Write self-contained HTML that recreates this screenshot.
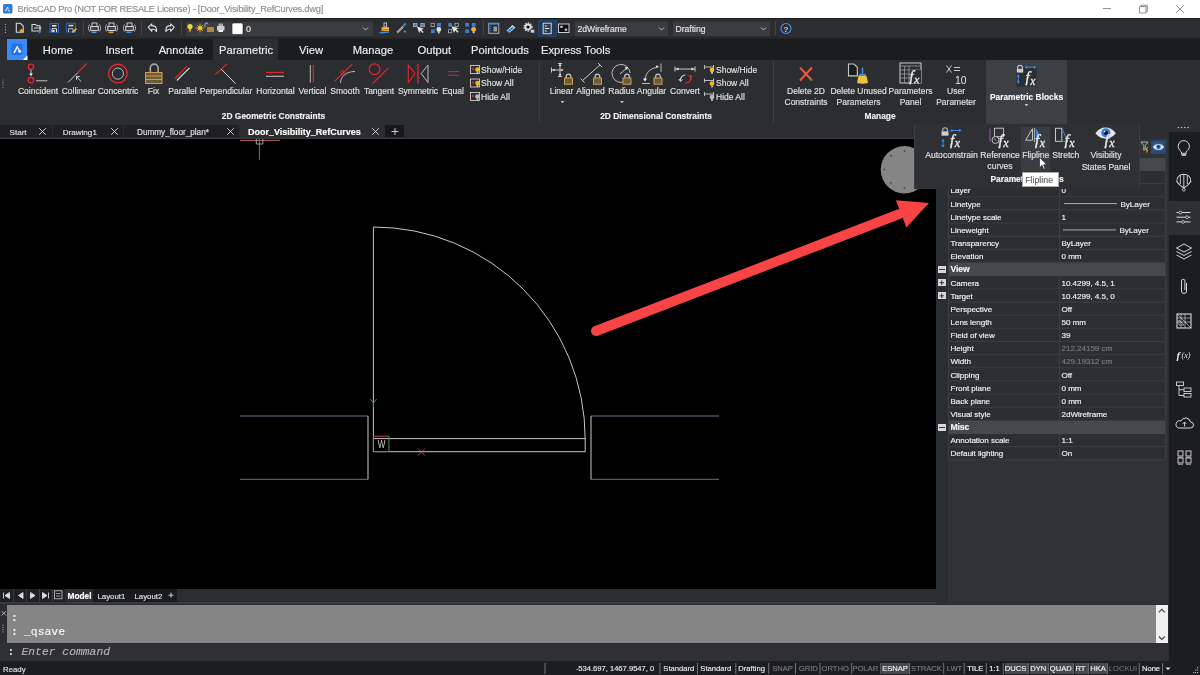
<!DOCTYPE html>
<html><head><meta charset="utf-8">
<style>
*{margin:0;padding:0;box-sizing:border-box}
html,body{width:1200px;height:675px;overflow:hidden;background:#2b2d30;font-family:"Liberation Sans",sans-serif;color:#e6e6e6;position:relative}
.a{position:absolute}
.t{position:absolute;white-space:nowrap;line-height:1;-webkit-text-stroke:0.15px currentColor}
#root{position:absolute;left:0;top:0;width:1200px;height:675px;overflow:hidden;will-change:transform}
svg{overflow:visible}
</style></head><body><div id="root">
<div class="a" style="left:0px;top:0px;width:1200px;height:18px;background:#ffffff;"></div>
<svg class="a" style="left:0px;top:0px" width="20" height="18" viewBox="0 0 20 18"><rect x="3" y="4" width="9.5" height="9.5" rx="1.5" fill="#2d7de0"/><path d="M5.6 11.2 L7.6 7 L8.4 8.6 M7.8 9.8 L9.8 11.2" stroke="#fff" stroke-width="1" fill="none"/></svg>
<div class="t" style="left:17.5px;top:5.00px;font-size:9.3px;color:#8e8e8e;font-weight:normal;font-family:'Liberation Sans',sans-serif;letter-spacing:-0.24px;font-style:normal;">BricsCAD Pro (NOT FOR RESALE License) - [Door_Visibility_RefCurves.dwg]</div>
<svg class="a" style="left:1095px;top:0px" width="105" height="18" viewBox="1095 0 105 18"><path d="M1103 8.5h8" stroke="#777" stroke-width="0.8"/><path d="M1139.5 6.5h6.5v6.5h-6.5z M1141 6.5v-1.3h6.3v6.3h-1.3" stroke="#777" stroke-width="0.8" fill="none"/><path d="M1176 5l8 8M1184 5l-8 8" stroke="#777" stroke-width="0.8"/></svg>
<div class="a" style="left:0px;top:18px;width:1200px;height:1px;background:#1c1d1f;"></div>
<div class="a" style="left:0px;top:19px;width:1200px;height:19px;background:#2b2d30;"></div>
<div class="a" style="left:0px;top:37.4px;width:1200px;height:1.8px;background:#25272a;"></div>
<svg class="a" style="left:0px;top:18px" width="200" height="21" viewBox="0 18 200 21"><circle cx="5.5" cy="24.5" r="0.6" fill="#bbb"/><circle cx="5.5" cy="27.1" r="0.6" fill="#bbb"/><circle cx="5.5" cy="29.7" r="0.6" fill="#bbb"/><circle cx="5.5" cy="32.3" r="0.6" fill="#bbb"/><path d="M16.3 23.3h4.2l2.7 2.7v6.2h-6.9z" stroke="#d8d8d8" stroke-width="1.1" fill="none"/><path d="M21.6 28.6l2.3 2.3-2.3 2.3-2.3-2.3z" fill="#f0a030"/><path d="M32 24.5h3.5l1 1.2h3.5v5.3h-8z" stroke="#d8d8d8" stroke-width="1.1" fill="none"/><path d="M34 28h7.5" stroke="#d8d8d8" stroke-width="1"/><path d="M39.6 30.4l1.5 1.5-1.5 1.5-1.5-1.5z" fill="#3c7fe0"/><rect x="50" y="23.5" width="8.5" height="8.8" fill="#2b2d30" stroke="#2466c0" stroke-width="1"/><rect x="52" y="25" width="4.5" height="1.6" fill="#e8e8e8"/><path d="M52 32v-3.3h4.5V32" stroke="#e8e8e8" stroke-width="1" fill="none"/><rect x="52.6" y="30" width="2" height="2" fill="#e8e8e8"/><rect x="66.5" y="23.3" width="9" height="8.8" fill="#2b2d30" stroke="#2466c0" stroke-width="1"/><rect x="68.5" y="24.8" width="5" height="1.6" fill="#d8d8d8"/><path d="M68.5 32v-3.3h4.5V32" stroke="#bbb" stroke-width="1" fill="none"/><path d="M72.5 32.5l4-4" stroke="#e8c060" stroke-width="1.6"/><path d="M83.5 21v14" stroke="#444" stroke-width="1"/><rect x="92.0" y="23" width="5" height="3.5" fill="#2b2d30" stroke="#ddd" stroke-width="0.9"/><rect x="90.7" y="26.5" width="7.6" height="4" fill="#444" stroke="#ddd" stroke-width="0.9"/><path d="M89.5 24.5c-1.3 2-1.3 5 0 7M99.5 24.5c1.3 2 1.3 5 0 7" stroke="#ccc" stroke-width="0.8" fill="none"/><path d="M91.5 32.3h5" stroke="#5aa0e0" stroke-width="1.6"/><rect x="109.0" y="23" width="5" height="3.5" fill="#2b2d30" stroke="#ddd" stroke-width="0.9"/><rect x="107.7" y="26.5" width="7.6" height="4" fill="#444" stroke="#ddd" stroke-width="0.9"/><path d="M106.5 24.5c-1.3 2-1.3 5 0 7M116.5 24.5c1.3 2 1.3 5 0 7" stroke="#ccc" stroke-width="0.8" fill="none"/><path d="M108.5 32.3h5" stroke="#f0a030" stroke-width="1.6"/><rect x="127.0" y="23" width="5" height="3.5" fill="#2b2d30" stroke="#ddd" stroke-width="0.9"/><rect x="125.7" y="26.5" width="7.6" height="4" fill="#444" stroke="#ddd" stroke-width="0.9"/><path d="M124.5 24.5c-1.3 2-1.3 5 0 7M134.5 24.5c1.3 2 1.3 5 0 7" stroke="#ccc" stroke-width="0.8" fill="none"/><path d="M126.5 32.3h5" stroke="#3c8ce7" stroke-width="1.6"/><path d="M141.5 21v14" stroke="#444" stroke-width="1"/><path d="M148.2 27.2l3.6-3.4v2.1h1.2c2.2 0 3.5 1.8 3.5 4.2v1.5c-0.6-1.6-1.7-2.4-3.5-2.4h-1.2v2.1z" fill="none" stroke="#e0e0e0" stroke-width="1.1" stroke-linejoin="round"/><path d="M174.2 27.2l-3.6-3.4v2.1h-1.2c-2.2 0-3.5 1.8-3.5 4.2v1.5c0.6-1.6 1.7-2.4 3.5-2.4h1.2v2.1z" fill="none" stroke="#e0e0e0" stroke-width="1.1" stroke-linejoin="round"/><path d="M181.5 21v14" stroke="#444" stroke-width="1"/></svg>
<div class="a" style="left:185.5px;top:22.3px;width:187.5px;height:13.5px;background:#3a3c40;"></div>
<svg class="a" style="left:180px;top:18px" width="200" height="21" viewBox="180 18 200 21"><circle cx="190" cy="26.5" r="2.6" fill="#f5d040"/><rect x="189" y="29" width="2" height="2.5" fill="#c9a030"/><circle cx="200" cy="28" r="2.5" fill="#f5c020"/><path d="M200 23.5v1.5M200 31v1.5M195.5 28h1.5M203 28h1.5M197 25l1 1M202 30l1 1M203 25l-1 1M197 31l1-1" stroke="#f5c020" stroke-width="0.8"/><rect x="207" y="27" width="7" height="5" fill="#b08840"/><path d="M205 27v-2.5a1.5 1.5 0 0 1 3 0" stroke="#ddd" stroke-width="0.8" fill="none"/><rect x="217" y="26" width="7.5" height="4.5" fill="#ccc"/><rect x="218.5" y="23.5" width="4.5" height="2.5" fill="#aaa"/><rect x="218.5" y="30" width="4.5" height="2" fill="#eee"/><rect x="232" y="23" width="11" height="11.5" rx="1.5" fill="#fff" stroke="#222" stroke-width="0.6"/><path d="M363 27.5l2.5 2.5 2.5-2.5" stroke="#ccc" stroke-width="0.9" fill="none"/></svg>
<div class="t" style="left:246px;top:25.00px;font-size:9px;color:#e6e6e6;font-weight:normal;font-family:'Liberation Sans',sans-serif;letter-spacing:0px;font-style:normal;">0</div>
<svg class="a" style="left:370px;top:18px" width="210" height="21" viewBox="370 18 210 21"><rect x="384" y="23" width="2.6" height="4" fill="none" stroke="#ddd" stroke-width="0.8"/><path d="M381.5 27.3h7.5v2h-7.5z" fill="#f0c040"/><path d="M381.5 29.3h7.5v1.8h-7.5z" fill="#e8a030"/><path d="M379.5 32.6c3 0.3 6 0 9.5-0.6" stroke="#3c8ce7" stroke-width="1.4" fill="none"/><path d="M397.2 32.5l6-6" stroke="#d8d8d8" stroke-width="1.8"/><path d="M397.2 32.5l6-6" stroke="#2b2d30" stroke-width="0.6"/><path d="M402.5 25l2.8-2.3 1.3 1.3-2.3 2.8z" fill="#3c7fd0"/><path d="M403.5 31.6l1.4-1.4 1.4 1.4-1.4 1.4z" fill="#4caf50"/><rect x="413.5" y="23.5" width="3.5" height="3.2" fill="#3c7fd0" stroke="#bbb" stroke-width="0.7"/><rect x="420.8" y="23.5" width="3.5" height="3.2" fill="#3c7fd0" stroke="#bbb" stroke-width="0.7"/><path d="M417 26.5l2.2 6.5 1.2-2.4 2.2 2.4 1-1-2.2-2.2 2.5-1z" fill="#e8e8e8"/><rect x="431" y="23.3" width="3.5" height="3.3" fill="none" stroke="#aaa" stroke-width="0.8"/><rect x="437.2" y="23" width="3.8" height="3.6" fill="#3c7fd0"/><rect x="431" y="29.4" width="3.8" height="3.6" fill="#3c7fd0"/><circle cx="438.8" cy="29.5" r="2.4" fill="#e0e0e0"/><rect x="437.9" y="31.5" width="1.8" height="2" fill="#ccc"/><rect x="448.2" y="23" width="3.8" height="3.6" fill="#3c7fd0"/><rect x="455" y="23.3" width="3.5" height="3.3" fill="none" stroke="#aaa" stroke-width="0.8"/><rect x="448.5" y="29.6" width="3.3" height="3.2" fill="none" stroke="#aaa" stroke-width="0.8"/><path d="M451.5 26.2l2.5 6.5 1.2-2.4 2.4 2.4 1-1-2.4-2.4 2.6-1z" fill="#e8e8e8"/><rect x="465.2" y="23" width="3.8" height="3.6" fill="#3c7fd0"/><rect x="471.8" y="23" width="3.8" height="3.6" fill="#3c7fd0"/><rect x="465.2" y="29.4" width="3.8" height="3.6" fill="#3c7fd0"/><circle cx="473.6" cy="29.3" r="2.4" fill="#f5b820"/><rect x="472.7" y="31.3" width="1.8" height="2" fill="#ccc"/><path d="M483.5 21v14" stroke="#444" stroke-width="1"/><rect x="488.8" y="23.3" width="10" height="10" fill="#2b2d30" stroke="#bbb" stroke-width="0.9"/><rect x="488.8" y="23" width="10" height="1.6" fill="#3c8ce7"/><path d="M490.3 26v5.5" stroke="#3c8ce7" stroke-width="1" stroke-dasharray="1 1"/><rect x="493.5" y="26.5" width="3.5" height="5" fill="#999"/><path d="M506.5 30.5l6-5.5 3 2.5-6 5.3z" fill="#d8d8d8"/><path d="M508.5 28.7l3 2.6" stroke="#2b2d30" stroke-width="0.7"/><path d="M507 31l5.5-4.5 1.5 1.5-5.5 4.5z" fill="#3c8ce7"/><circle cx="528" cy="27" r="2.6" fill="none" stroke="#ddd" stroke-width="2"/><circle cx="528" cy="27" r="4" fill="none" stroke="#ddd" stroke-width="1.3" stroke-dasharray="1.3 1.3"/><circle cx="528" cy="27" r="1.3" fill="#111"/><rect x="530.5" y="29.5" width="4" height="3.5" fill="#ccd" stroke="#2b2d30" stroke-width="0.5"/><rect x="538.5" y="20.5" width="18" height="16" fill="#1f3a5c" stroke="#284d78" stroke-width="0.7"/><rect x="543.2" y="23.2" width="8" height="10.5" fill="#2b3d55" stroke="#d8d8d8" stroke-width="1"/><path d="M544.8 26h2M544.8 28.5h4.5M544.8 31h2" stroke="#e8e8e8" stroke-width="1.1"/><rect x="558.5" y="24" width="10.5" height="8.5" fill="#111" stroke="#ccc" stroke-width="1"/><rect x="560.3" y="25.8" width="2.3" height="2" fill="#ddd"/><rect x="564.8" y="28.7" width="2.3" height="2" fill="#ddd"/></svg>
<div class="a" style="left:574.6px;top:21.8px;width:93.7px;height:14px;background:#3a3c40;"></div>
<div class="t" style="left:577.5px;top:25.00px;font-size:8.6px;color:#e6e6e6;font-weight:normal;font-family:'Liberation Sans',sans-serif;letter-spacing:0px;font-style:normal;">2dWireframe</div>
<div class="a" style="left:673px;top:21.8px;width:97.4px;height:14px;background:#3a3c40;"></div>
<div class="t" style="left:675.5px;top:25.00px;font-size:8.6px;color:#e6e6e6;font-weight:normal;font-family:'Liberation Sans',sans-serif;letter-spacing:0px;font-style:normal;">Drafting</div>
<svg class="a" style="left:650px;top:18px" width="150" height="21" viewBox="650 18 150 21"><path d="M659 27.5l2.5 2.5 2.5-2.5M761 27.5l2.5 2.5 2.5-2.5" stroke="#ccc" stroke-width="0.9" fill="none"/><path d="M775.5 21v14" stroke="#444" stroke-width="1"/><circle cx="786" cy="28.5" r="5" fill="none" stroke="#3c8ce7" stroke-width="1.2"/><text x="786" y="31.5" font-size="8" font-family="Liberation Sans" font-weight="bold" fill="#ddd" text-anchor="middle">?</text></svg>
<div class="a" style="left:0px;top:39.2px;width:27px;height:20.8px;background:#2b2d30;"></div>
<div class="a" style="left:27px;top:39.2px;width:1173px;height:20.8px;background:#1a1c1e;"></div>
<div class="a" style="left:6.9px;top:39.3px;width:20.6px;height:20.6px;background:#3b8af5;"></div>
<svg class="a" style="left:0px;top:38px" width="30" height="23" viewBox="0 38 30 23"><rect x="11.5" y="43.5" width="11" height="11.5" rx="1.5" fill="#1f70ea"/><path d="M14 52.8l3.6-6.4" stroke="#fff" stroke-width="1.6" fill="none"/><path d="M17 46.5l2.5 4" stroke="#fff" stroke-width="1.2"/><circle cx="19.7" cy="51.2" r="1.5" fill="#fff"/><path d="M27.5 55.3v4.6h-4.6z" fill="#fff"/></svg>
<div class="a" style="left:213px;top:39.2px;width:64.8px;height:20.8px;background:#2b2d30;"></div>
<div class="t" style="left:-142.25px;width:400px;text-align:center;top:45.00px;font-size:11.2px;color:#ececec;font-weight:normal;font-family:'Liberation Sans',sans-serif;letter-spacing:0px;font-style:normal;">Home</div>
<div class="t" style="left:-80.5px;width:400px;text-align:center;top:45.00px;font-size:11.2px;color:#ececec;font-weight:normal;font-family:'Liberation Sans',sans-serif;letter-spacing:0px;font-style:normal;">Insert</div>
<div class="t" style="left:-18.94999999999999px;width:400px;text-align:center;top:45.00px;font-size:11.2px;color:#ececec;font-weight:normal;font-family:'Liberation Sans',sans-serif;letter-spacing:0px;font-style:normal;">Annotate</div>
<div class="t" style="left:46.0px;width:400px;text-align:center;top:45.00px;font-size:11.2px;color:#ececec;font-weight:normal;font-family:'Liberation Sans',sans-serif;letter-spacing:0px;font-style:normal;">Parametric</div>
<div class="t" style="left:111.0px;width:400px;text-align:center;top:45.00px;font-size:11.2px;color:#ececec;font-weight:normal;font-family:'Liberation Sans',sans-serif;letter-spacing:0px;font-style:normal;">View</div>
<div class="t" style="left:172.89999999999998px;width:400px;text-align:center;top:45.00px;font-size:11.2px;color:#ececec;font-weight:normal;font-family:'Liberation Sans',sans-serif;letter-spacing:0px;font-style:normal;">Manage</div>
<div class="t" style="left:234.25px;width:400px;text-align:center;top:45.00px;font-size:11.2px;color:#ececec;font-weight:normal;font-family:'Liberation Sans',sans-serif;letter-spacing:0px;font-style:normal;">Output</div>
<div class="t" style="left:299.9px;width:400px;text-align:center;top:45.00px;font-size:11.2px;color:#ececec;font-weight:normal;font-family:'Liberation Sans',sans-serif;letter-spacing:0px;font-style:normal;">Pointclouds</div>
<div class="t" style="left:375.70000000000005px;width:400px;text-align:center;top:45.00px;font-size:11.2px;color:#ececec;font-weight:normal;font-family:'Liberation Sans',sans-serif;letter-spacing:0px;font-style:normal;">Express Tools</div>
<div class="a" style="left:0px;top:60px;width:1200px;height:65px;background:#2b2d30;"></div>
<div class="a" style="left:986.3px;top:60.1px;width:80.5px;height:64.7px;background:#3c3f43;"></div>
<svg class="a" style="left:0px;top:60px" width="10" height="40" viewBox="0 60 10 40"><circle cx="3" cy="80.0" r="0.55" fill="#aaa"/><circle cx="3" cy="82.4" r="0.55" fill="#aaa"/><circle cx="3" cy="84.8" r="0.55" fill="#aaa"/><circle cx="3" cy="87.2" r="0.55" fill="#aaa"/></svg>
<svg class="a" style="left:0px;top:60px" width="1100" height="65" viewBox="0 60 1100 65"><circle cx="31" cy="66.8" r="2.7" fill="none" stroke="#e3262d" stroke-width="1.3"/><path d="M31 70v4.5" stroke="#eee" stroke-width="0.8"/><path d="M29.2 73.5h3.6L31 76.2z" fill="#eee"/><circle cx="31" cy="80.2" r="2.7" fill="none" stroke="#e3262d" stroke-width="1.3"/><path d="M36 80.7h11.3" stroke="#aaa" stroke-width="1.2"/><path d="M68 82.5L78 72.5" stroke="#ccc" stroke-width="1"/><path d="M78 72.5L86.5 63.5" stroke="#e3262d" stroke-width="1.2"/><path d="M76.5 76.5l4.5 5M76.5 76.5v3.3M76.5 76.5h3.3" stroke="#ddd" stroke-width="0.9"/><circle cx="117.9" cy="73.6" r="9.3" fill="none" stroke="#e3262d" stroke-width="1.4"/><circle cx="117.9" cy="73.6" r="5.6" fill="none" stroke="#bbb" stroke-width="1"/><path d="M150.3 72.5v-4.5a3.9 3.9 0 0 1 7.8 0v4.5" stroke="#aaa" stroke-width="1.6" fill="none"/><rect x="145.5" y="72.5" width="16.5" height="11" fill="#6d5a38" stroke="#d8a850" stroke-width="0.9"/><path d="M145.5 76h16.5M145.5 79.5h16.5" stroke="#d8a850" stroke-width="0.9"/><path d="M175 78.5L187 66.2" stroke="#e3262d" stroke-width="1.1"/><path d="M176.8 80.5L189.6 67.8" stroke="#ddd" stroke-width="1.1"/><path d="M215.2 74.6L227 64" stroke="#e3262d" stroke-width="1.2"/><path d="M221.3 69.2L235.5 83.6" stroke="#ddd" stroke-width="1"/><path d="M266 72.4h18" stroke="#e3262d" stroke-width="1.2"/><path d="M266 76.3h18" stroke="#bbb" stroke-width="1.1"/><path d="M310.3 65v17.5" stroke="#bbb" stroke-width="1"/><path d="M313.3 65v17.5" stroke="#e3262d" stroke-width="1.2"/><path d="M340.5 83c0-6 5-11.5 14.5-11.5" stroke="#bbb" stroke-width="1" fill="none"/><path d="M334.7 81.1L352.2 64.2" stroke="#e3262d" stroke-width="1.2"/><circle cx="342.6" cy="72.3" r="1.8" fill="none" stroke="#e3262d" stroke-width="1"/><circle cx="374.5" cy="69.3" r="5.4" fill="none" stroke="#e3262d" stroke-width="1.2"/><path d="M372.7 83.5L388.4 67.9" stroke="#e3262d" stroke-width="1.2"/><path d="M408.3 65v17.5l6.7-9z" fill="none" stroke="#e3262d" stroke-width="1.1"/><path d="M418 64v19.5" stroke="#e3262d" stroke-width="1.3"/><path d="M428 65v17.5l-6.8-9z" fill="none" stroke="#bbb" stroke-width="1"/><path d="M448 71.6h11M448 75.2h11" stroke="#e3262d" stroke-width="0.9"/><rect x="470.5" y="65.5" width="9" height="8" fill="none" stroke="#ccc" stroke-width="0.9"/><rect x="472" y="68.0" width="2" height="2" fill="#c03030"/><circle cx="477.5" cy="69.5" r="2.3" fill="#f5b820"/><rect x="476.7" y="71.5" width="1.6" height="2" fill="#ccc"/><rect x="470.5" y="79" width="9" height="8" fill="none" stroke="#ccc" stroke-width="0.9"/><rect x="472" y="81.5" width="2" height="2" fill="#c03030"/><circle cx="477.5" cy="83" r="2.3" fill="#f5b820"/><rect x="476.7" y="85" width="1.6" height="2" fill="#ccc"/><rect x="470.5" y="92.5" width="9" height="8" fill="none" stroke="#ccc" stroke-width="0.9"/><rect x="472" y="95.0" width="2" height="2" fill="#c03030"/><circle cx="477.5" cy="96.5" r="2.3" fill="#bbb"/><rect x="476.7" y="98.5" width="1.6" height="2" fill="#ccc"/><path d="M539.2 61v62" stroke="#3c3f43" stroke-width="1"/><path d="M558 63.5h4M560 63.5v13M558 76.5h4M551.5 70h11M551.5 67.5v5" stroke="#ddd" stroke-width="0.9"/><path d="M558.5 66l1.5-2 1.5 2zM558.5 74l1.5 2 1.5-2zM552.5 70l2-1.3v2.6zM563.5 70l-2-1.3v2.6z" fill="#eee"/><path d="M582.5 80.5L600 65M580.5 78.5l4 4M598 63l4 4" stroke="#ddd" stroke-width="0.9"/><path d="M625 81.5A9 9 0 1 1 630 73" stroke="#ccc" stroke-width="0.9" fill="none"/><path d="M620 74l7.5-6.5" stroke="#ddd" stroke-width="0.9"/><path d="M628 67l-3.5 0.6 2.5 2.5z" fill="#eee"/><path d="M645 79.5c1-7 5-11 11.5-12" stroke="#ccc" stroke-width="0.9" fill="none"/><path d="M661 63.5v8.5M642 83.5h8" stroke="#ccc" stroke-width="0.9"/><path d="M643 78.5h4l-2 3zM656.5 65l2.5 2-3 1z" fill="#eee"/><path d="M566.2 78v-1.6a2.3 2.3 0 0 1 4.6 0v1.6" stroke="#ccc" stroke-width="1.2" fill="none"/><rect x="564.5" y="78" width="8" height="6.2" fill="#6d5a38" stroke="#d8a850" stroke-width="0.9"/><path d="M595.2 78v-1.6a2.3 2.3 0 0 1 4.6 0v1.6" stroke="#ccc" stroke-width="1.2" fill="none"/><rect x="593.5" y="78" width="8" height="6.2" fill="#6d5a38" stroke="#d8a850" stroke-width="0.9"/><path d="M624.7 78v-1.6a2.3 2.3 0 0 1 4.6 0v1.6" stroke="#ccc" stroke-width="1.2" fill="none"/><rect x="623" y="78" width="8" height="6.2" fill="#6d5a38" stroke="#d8a850" stroke-width="0.9"/><path d="M655.7 78v-1.6a2.3 2.3 0 0 1 4.6 0v1.6" stroke="#ccc" stroke-width="1.2" fill="none"/><rect x="654" y="78" width="8" height="6.2" fill="#6d5a38" stroke="#d8a850" stroke-width="0.9"/><path d="M675 66.5v5M695 66.5v5M675 69h20" stroke="#ddd" stroke-width="0.9"/><path d="M676 69l2.5-1.5v3zM694 69l-2.5-1.5v3z" fill="#eee"/><path d="M680.5 80.5a5 5 0 0 1 5-5.5" stroke="#ddd" stroke-width="1.1" fill="none"/><path d="M679 79l1.5 2.5 2-2" stroke="#ddd" stroke-width="1" fill="none"/><path d="M690.5 76a5 5 0 0 1-5 7" stroke="#e03030" stroke-width="1.2" fill="none"/><path d="M692 77.5l-1.5-2.5-2 2" stroke="#e03030" stroke-width="1" fill="none"/><path d="M704.5 65v4M704.5 67h9M713.5 65v4" stroke="#ccc" stroke-width="0.9"/><circle cx="712" cy="70" r="2.3" fill="#f5b820"/><rect x="711.2" y="72" width="1.6" height="2" fill="#ccc"/><path d="M704.5 78.5v4M704.5 80.5h9M713.5 78.5v4" stroke="#ccc" stroke-width="0.9"/><circle cx="712" cy="83.5" r="2.3" fill="#f5b820"/><rect x="711.2" y="85.5" width="1.6" height="2" fill="#ccc"/><path d="M704.5 92v4M704.5 94h9M713.5 92v4" stroke="#ccc" stroke-width="0.9"/><circle cx="712" cy="97" r="2.3" fill="#bbb"/><rect x="711.2" y="99" width="1.6" height="2" fill="#ccc"/><path d="M773.5 61v62" stroke="#3c3f43" stroke-width="1"/><path d="M800 67.5l12 13M812 67.5l-12 13" stroke="#f0553c" stroke-width="2"/><path d="M848.5 64h5.5l3.3 3.3v8.6h-8.8z" fill="#1a1c1e" stroke="#c8c8c8" stroke-width="1.1"/><path d="M862.5 67.5v6" stroke="#5a90f0" stroke-width="1.4"/><path d="M859.5 73.8h6l1 2h-8z" fill="#3c8ce7"/><path d="M858.5 75.8h8l1.5 7.2c-4 1-7 1-11 0z" fill="#f0c040"/><rect x="900" y="63" width="21" height="20" fill="none" stroke="#ccc" stroke-width="1"/><path d="M900 66h21M900 70h21M900 74h21M900 78h21M904.5 66v17M909 66v17" stroke="#aaa" stroke-width="0.7"/><rect x="910" y="70" width="11" height="13" fill="#2b2d30"/><text x="909.5" y="80.5" font-family="Liberation Serif" font-style="italic" font-size="14.5" fill="#ececec" stroke="#ececec" stroke-width="0.35">f</text><text x="914.3" y="83.1" font-family="Liberation Serif" font-style="italic" font-size="11.3" fill="#ececec" stroke="#ececec" stroke-width="0.3">x</text><path d="M946.5 65.5l5 7M951.5 65.5l-5 7M954 67.5h6M954 70.5h6" stroke="#ddd" stroke-width="0.9"/><text x="955" y="84" font-family="Liberation Sans" font-size="10.5" fill="#e6e6e6">10</text><rect x="1016.5" y="67.5" width="20" height="19" fill="#2b2d30"/><path d="M1017.6 69v-1.3a2.4 2.4 0 0 1 4.8 0V69" stroke="#ccc" stroke-width="1.1" fill="none"/><rect x="1016.8" y="68.8" width="6.4" height="3.8" fill="#ccc"/><path d="M1026 67.2h9" stroke="#3c8ce7" stroke-width="1"/><path d="M1024.8 67.2l2.3-1.8v3.6zM1036.2 67.2l-2.3-1.8v3.6z" fill="#3c8ce7"/><path d="M1018.3 76v6" stroke="#3c8ce7" stroke-width="1"/><path d="M1018.3 74.2l-1.8 2.4h3.6zM1018.3 83.8l-1.8-2.4h3.6z" fill="#3c8ce7"/><text x="1025.5" y="82" font-family="Liberation Serif" font-style="italic" font-size="15" fill="#ececec" stroke="#ececec" stroke-width="0.35">f</text><text x="1030.3" y="84.6" font-family="Liberation Serif" font-style="italic" font-size="11.7" fill="#ececec" stroke="#ececec" stroke-width="0.3">x</text><path d="M562.5 103l-2-1.8h4zM622 103l-2-1.8h4zM1026.5 106l-2-1.8h4z" fill="#eee"/></svg>
<div class="t" style="left:-162px;width:400px;text-align:center;top:87.00px;font-size:8.5px;color:#e0e0e0;font-weight:normal;font-family:'Liberation Sans',sans-serif;letter-spacing:0px;font-style:normal;">Coincident</div>
<div class="t" style="left:-121.5px;width:400px;text-align:center;top:87.00px;font-size:8.5px;color:#e0e0e0;font-weight:normal;font-family:'Liberation Sans',sans-serif;letter-spacing:0px;font-style:normal;">Collinear</div>
<div class="t" style="left:-82px;width:400px;text-align:center;top:87.00px;font-size:8.5px;color:#e0e0e0;font-weight:normal;font-family:'Liberation Sans',sans-serif;letter-spacing:0px;font-style:normal;">Concentric</div>
<div class="t" style="left:-46.5px;width:400px;text-align:center;top:87.00px;font-size:8.5px;color:#e0e0e0;font-weight:normal;font-family:'Liberation Sans',sans-serif;letter-spacing:0px;font-style:normal;">Fix</div>
<div class="t" style="left:-17.5px;width:400px;text-align:center;top:87.00px;font-size:8.5px;color:#e0e0e0;font-weight:normal;font-family:'Liberation Sans',sans-serif;letter-spacing:0px;font-style:normal;">Parallel</div>
<div class="t" style="left:26px;width:400px;text-align:center;top:87.00px;font-size:8.5px;color:#e0e0e0;font-weight:normal;font-family:'Liberation Sans',sans-serif;letter-spacing:0px;font-style:normal;">Perpendicular</div>
<div class="t" style="left:75.5px;width:400px;text-align:center;top:87.00px;font-size:8.5px;color:#e0e0e0;font-weight:normal;font-family:'Liberation Sans',sans-serif;letter-spacing:0px;font-style:normal;">Horizontal</div>
<div class="t" style="left:112.5px;width:400px;text-align:center;top:87.00px;font-size:8.5px;color:#e0e0e0;font-weight:normal;font-family:'Liberation Sans',sans-serif;letter-spacing:0px;font-style:normal;">Vertical</div>
<div class="t" style="left:145px;width:400px;text-align:center;top:87.00px;font-size:8.5px;color:#e0e0e0;font-weight:normal;font-family:'Liberation Sans',sans-serif;letter-spacing:0px;font-style:normal;">Smooth</div>
<div class="t" style="left:179px;width:400px;text-align:center;top:87.00px;font-size:8.5px;color:#e0e0e0;font-weight:normal;font-family:'Liberation Sans',sans-serif;letter-spacing:0px;font-style:normal;">Tangent</div>
<div class="t" style="left:218px;width:400px;text-align:center;top:87.00px;font-size:8.5px;color:#e0e0e0;font-weight:normal;font-family:'Liberation Sans',sans-serif;letter-spacing:0px;font-style:normal;">Symmetric</div>
<div class="t" style="left:253px;width:400px;text-align:center;top:87.00px;font-size:8.5px;color:#e0e0e0;font-weight:normal;font-family:'Liberation Sans',sans-serif;letter-spacing:0px;font-style:normal;">Equal</div>
<div class="t" style="left:481px;top:66.00px;font-size:8.5px;color:#e0e0e0;font-weight:normal;font-family:'Liberation Sans',sans-serif;letter-spacing:0px;font-style:normal;">Show/Hide</div>
<div class="t" style="left:716px;top:66.00px;font-size:8.5px;color:#e0e0e0;font-weight:normal;font-family:'Liberation Sans',sans-serif;letter-spacing:0px;font-style:normal;">Show/Hide</div>
<div class="t" style="left:481px;top:79.00px;font-size:8.5px;color:#e0e0e0;font-weight:normal;font-family:'Liberation Sans',sans-serif;letter-spacing:0px;font-style:normal;">Show All</div>
<div class="t" style="left:716px;top:79.00px;font-size:8.5px;color:#e0e0e0;font-weight:normal;font-family:'Liberation Sans',sans-serif;letter-spacing:0px;font-style:normal;">Show All</div>
<div class="t" style="left:481px;top:93.00px;font-size:8.5px;color:#e0e0e0;font-weight:normal;font-family:'Liberation Sans',sans-serif;letter-spacing:0px;font-style:normal;">Hide All</div>
<div class="t" style="left:716px;top:93.00px;font-size:8.5px;color:#e0e0e0;font-weight:normal;font-family:'Liberation Sans',sans-serif;letter-spacing:0px;font-style:normal;">Hide All</div>
<div class="t" style="left:361.5px;width:400px;text-align:center;top:87.00px;font-size:8.5px;color:#e0e0e0;font-weight:normal;font-family:'Liberation Sans',sans-serif;letter-spacing:0px;font-style:normal;">Linear</div>
<div class="t" style="left:390.5px;width:400px;text-align:center;top:87.00px;font-size:8.5px;color:#e0e0e0;font-weight:normal;font-family:'Liberation Sans',sans-serif;letter-spacing:0px;font-style:normal;">Aligned</div>
<div class="t" style="left:421.5px;width:400px;text-align:center;top:87.00px;font-size:8.5px;color:#e0e0e0;font-weight:normal;font-family:'Liberation Sans',sans-serif;letter-spacing:0px;font-style:normal;">Radius</div>
<div class="t" style="left:451.5px;width:400px;text-align:center;top:87.00px;font-size:8.5px;color:#e0e0e0;font-weight:normal;font-family:'Liberation Sans',sans-serif;letter-spacing:0px;font-style:normal;">Angular</div>
<div class="t" style="left:485px;width:400px;text-align:center;top:87.00px;font-size:8.5px;color:#e0e0e0;font-weight:normal;font-family:'Liberation Sans',sans-serif;letter-spacing:0px;font-style:normal;">Convert</div>
<div class="t" style="left:606px;width:400px;text-align:center;top:87.00px;font-size:8.5px;color:#e0e0e0;font-weight:normal;font-family:'Liberation Sans',sans-serif;letter-spacing:0px;font-style:normal;">Delete 2D</div>
<div class="t" style="left:606px;width:400px;text-align:center;top:98.00px;font-size:8.5px;color:#e0e0e0;font-weight:normal;font-family:'Liberation Sans',sans-serif;letter-spacing:0px;font-style:normal;">Constraints</div>
<div class="t" style="left:658.5px;width:400px;text-align:center;top:87.00px;font-size:8.5px;color:#e0e0e0;font-weight:normal;font-family:'Liberation Sans',sans-serif;letter-spacing:0px;font-style:normal;">Delete Unused</div>
<div class="t" style="left:658.5px;width:400px;text-align:center;top:98.00px;font-size:8.5px;color:#e0e0e0;font-weight:normal;font-family:'Liberation Sans',sans-serif;letter-spacing:0px;font-style:normal;">Parameters</div>
<div class="t" style="left:710.5px;width:400px;text-align:center;top:87.00px;font-size:8.5px;color:#e0e0e0;font-weight:normal;font-family:'Liberation Sans',sans-serif;letter-spacing:0px;font-style:normal;">Parameters</div>
<div class="t" style="left:710.5px;width:400px;text-align:center;top:98.00px;font-size:8.5px;color:#e0e0e0;font-weight:normal;font-family:'Liberation Sans',sans-serif;letter-spacing:0px;font-style:normal;">Panel</div>
<div class="t" style="left:756px;width:400px;text-align:center;top:87.00px;font-size:8.5px;color:#e0e0e0;font-weight:normal;font-family:'Liberation Sans',sans-serif;letter-spacing:0px;font-style:normal;">User</div>
<div class="t" style="left:756px;width:400px;text-align:center;top:98.00px;font-size:8.5px;color:#e0e0e0;font-weight:normal;font-family:'Liberation Sans',sans-serif;letter-spacing:0px;font-style:normal;">Parameter</div>
<div class="t" style="left:73.5px;width:400px;text-align:center;top:112.00px;font-size:8.4px;color:#f0f0f0;font-weight:bold;font-family:'Liberation Sans',sans-serif;letter-spacing:0px;font-style:normal;">2D Geometric Constraints</div>
<div class="t" style="left:456px;width:400px;text-align:center;top:112.00px;font-size:8.4px;color:#f0f0f0;font-weight:bold;font-family:'Liberation Sans',sans-serif;letter-spacing:0px;font-style:normal;">2D Dimensional Constraints</div>
<div class="t" style="left:680px;width:400px;text-align:center;top:112.00px;font-size:8.4px;color:#f0f0f0;font-weight:bold;font-family:'Liberation Sans',sans-serif;letter-spacing:0px;font-style:normal;">Manage</div>
<div class="t" style="left:826.5px;width:400px;text-align:center;top:93.00px;font-size:8.4px;color:#f4f4f4;font-weight:bold;font-family:'Liberation Sans',sans-serif;letter-spacing:0px;font-style:normal;">Parametric Blocks</div>
<div class="a" style="left:0px;top:125px;width:936px;height:13.5px;background:#2b2d30;"></div>
<div class="a" style="left:0px;top:125.3px;width:239.4px;height:12.2px;background:#1f2023;"></div>
<div class="a" style="left:239.4px;top:125.3px;width:145px;height:12.2px;background:#2b2d30;"></div>
<div class="a" style="left:385.3px;top:125.3px;width:18.4px;height:12.2px;background:#17181a;"></div>
<div class="a" style="left:51.5px;top:125.3px;width:0.8px;height:12.2px;background:#2b2d30;"></div>
<div class="a" style="left:122.5px;top:125.3px;width:0.8px;height:12.2px;background:#2b2d30;"></div>
<div class="a" style="left:0px;top:137.5px;width:936px;height:1px;background:#3a3c40;"></div>
<div class="t" style="left:9.5px;top:129.00px;font-size:8.1px;color:#e0e0e0;font-weight:normal;font-family:'Liberation Sans',sans-serif;letter-spacing:0px;font-style:normal;">Start</div>
<div class="t" style="left:62.7px;top:129.00px;font-size:8.1px;color:#e0e0e0;font-weight:normal;font-family:'Liberation Sans',sans-serif;letter-spacing:0px;font-style:normal;">Drawing1</div>
<div class="t" style="left:137px;top:129.00px;font-size:8.2px;color:#e0e0e0;font-weight:normal;font-family:'Liberation Sans',sans-serif;letter-spacing:0px;font-style:normal;">Dummy_floor_plan*</div>
<div class="t" style="left:248px;top:128.00px;font-size:9px;color:#ffffff;font-weight:bold;font-family:'Liberation Sans',sans-serif;letter-spacing:0px;font-style:normal;">Door_Visibility_RefCurves</div>
<svg class="a" style="left:0px;top:124px" width="410" height="16" viewBox="0 124 410 16"><path d="M39.2 128.2l6.6 6.6M45.8 128.2l-6.6 6.6" stroke="#ddd" stroke-width="0.9"/><path d="M111.2 128.2l6.6 6.6M117.8 128.2l-6.6 6.6" stroke="#ddd" stroke-width="0.9"/><path d="M227.2 128.2l6.6 6.6M233.8 128.2l-6.6 6.6" stroke="#ddd" stroke-width="0.9"/><path d="M372.2 128.2l6.6 6.6M378.8 128.2l-6.6 6.6" stroke="#ddd" stroke-width="0.9"/><path d="M391.5 131.5h7M395 128v7" stroke="#ddd" stroke-width="0.9"/></svg>
<div class="a" style="left:0px;top:138.5px;width:936px;height:450.2px;background:#000;"></div>
<svg class="a" style="left:0px;top:138px" width="936" height="451" viewBox="0 138 936 451"><path d="M240 140.4h40" stroke="#c06070" stroke-width="1"/><path d="M259.4 139v20.8" stroke="#3c9a50" stroke-width="1"/><path d="M256.3 139v5h6.6v-5" stroke="#aaa" stroke-width="0.9" fill="none"/><path d="M240 416h128M240 479.3h128" stroke="#7c6a84" stroke-width="1"/><path d="M368 416v63.3" stroke="#c8c8c8" stroke-width="1"/><path d="M591 416h128M591 479.3h128" stroke="#7c6a84" stroke-width="1"/><path d="M591 416v63.3" stroke="#c8c8c8" stroke-width="1"/><path d="M373.4 452V227 A211.8 212 0 0 1 585.2 439" stroke="#c8c8c8" stroke-width="1" fill="none"/><path d="M373.4 438.6H585.2V451.7H373.4" stroke="#c8c8c8" stroke-width="1" fill="none"/><path d="M373.4 436.2h15.5M373.4 451.7h15.5" stroke="#c04848" stroke-width="1"/><path d="M388.9 436.2v15.5" stroke="#3c9a50" stroke-width="1"/><path d="M373.4 436.2v15.5" stroke="#3c9a50" stroke-width="0.8"/><text x="381.6" y="448.2" font-family="Liberation Sans" font-size="9.5" fill="#d0d0d0" text-anchor="middle" transform="translate(381.6 448.2) scale(0.85 1.1) translate(-381.6 -448.2)">W</text><path d="M370.2 399l3.2 4 3.2-4" stroke="#3c9a60" stroke-width="0.9" fill="none"/><path d="M373.4 402v5.5" stroke="#3c9a60" stroke-width="1"/><path d="M418 448.5l7 7M425 448.5l-7 7" stroke="#c06878" stroke-width="0.8"/><circle cx="904.4" cy="169.8" r="23.7" fill="#858585"/><path d="M903.2 150.2h2.6l-1.3 2z" fill="#444"/><path d="M889.7 156.3h2.6l-1.3-2z" fill="#444"/><path d="M883.7 168.2v2.6l2-1.3z" fill="#444"/><path d="M889.7 182.2h2.6l-1.3 2z" fill="#444"/><path d="M903.2 188.8h2.6l-1.3-2z" fill="#444"/><path d="M596 331L899 214.2" stroke="#f84444" stroke-width="10" stroke-linecap="round"/><path d="M928.9 203.1L895.9 200.2L906.4 227.4z" fill="#f84444"/></svg>
<div class="a" style="left:0px;top:588.7px;width:936px;height:13px;background:#2b2d30;"></div>
<div class="a" style="left:0px;top:589px;width:65px;height:12.5px;background:#1f2023;"></div>
<div class="a" style="left:13px;top:589px;width:0.8px;height:12.5px;background:#3a3c40;"></div>
<div class="a" style="left:26px;top:589px;width:0.8px;height:12.5px;background:#3a3c40;"></div>
<div class="a" style="left:39px;top:589px;width:0.8px;height:12.5px;background:#3a3c40;"></div>
<div class="a" style="left:52px;top:589px;width:0.8px;height:12.5px;background:#3a3c40;"></div>
<div class="a" style="left:65px;top:589px;width:28px;height:12.5px;background:#2b2d30;"></div>
<div class="a" style="left:93px;top:589px;width:84px;height:12.5px;background:#1a1b1d;"></div>
<div class="a" style="left:0px;top:601.5px;width:936px;height:2.5px;background:#37393d;"></div>
<svg class="a" style="left:0px;top:588px" width="180" height="16" viewBox="0 588 180 16"><path d="M3.5 592.5v6M9.5 592.5v6l-4.5-3z M23 592.5v6l-4.5-3z M30.5 592.5v6l4.5-3z M42.5 592.5v6l4.5-3z M48.5 592.5v6" stroke="#ddd" stroke-width="0.9" fill="#ddd"/><rect x="54.5" y="590.8" width="7.5" height="8" fill="none" stroke="#ccc" stroke-width="0.8"/><path d="M56 593.5h4.5M56 596h4.5" stroke="#ccc" stroke-width="0.7"/><path d="M168.5 595.2h5M171 592.7v5" stroke="#ddd" stroke-width="0.9"/></svg>
<div class="t" style="left:67.5px;top:592.00px;font-size:8.3px;color:#ffffff;font-weight:bold;font-family:'Liberation Sans',sans-serif;letter-spacing:0px;font-style:normal;">Model</div>
<div class="t" style="left:97.5px;top:593.00px;font-size:7.8px;color:#e0e0e0;font-weight:normal;font-family:'Liberation Sans',sans-serif;letter-spacing:0px;font-style:normal;">Layout1</div>
<div class="t" style="left:134.5px;top:593.00px;font-size:7.8px;color:#e0e0e0;font-weight:normal;font-family:'Liberation Sans',sans-serif;letter-spacing:0px;font-style:normal;">Layout2</div>
<div class="a" style="left:936px;top:138px;width:232px;height:467px;background:#303336;"></div>
<div class="a" style="left:936px;top:138px;width:12px;height:467px;background:#2a2d31;"></div>
<div class="a" style="left:948px;top:157.85px;width:218px;height:13.15px;background:#45484c;"></div>
<div class="t" style="left:950.5px;top:160.00px;font-size:8.6px;color:#f4f4f4;font-weight:bold;font-family:'Liberation Sans',sans-serif;letter-spacing:-0.1px;font-style:normal;">General</div>
<div class="a" style="left:937.5px;top:160.85px;width:8.5px;height:7px;background:#d8d8d8;"></div>
<div class="a" style="left:939px;top:163.85px;width:5.5px;height:1px;background:#333;"></div>
<div class="a" style="left:948px;top:171.0px;width:218px;height:13.15px;background:#2c2e31;"></div>
<div class="t" style="left:950.5px;top:174.00px;font-size:8.1px;color:#f2f2f2;font-weight:normal;font-family:'Liberation Sans',sans-serif;letter-spacing:-0.05px;font-style:normal;">Color</div>
<div class="t" style="left:1061.5px;top:174.00px;font-size:8.1px;color:#f0f0f0;font-weight:normal;font-family:'Liberation Sans',sans-serif;letter-spacing:-0.05px;font-style:normal;">ByLayer</div>
<div class="a" style="left:948px;top:184.15px;width:218px;height:13.15px;background:#2c2e31;"></div>
<div class="t" style="left:950.5px;top:187.00px;font-size:8.1px;color:#f2f2f2;font-weight:normal;font-family:'Liberation Sans',sans-serif;letter-spacing:-0.05px;font-style:normal;">Layer</div>
<div class="t" style="left:1061.5px;top:187.00px;font-size:8.1px;color:#f0f0f0;font-weight:normal;font-family:'Liberation Sans',sans-serif;letter-spacing:-0.05px;font-style:normal;">0</div>
<div class="a" style="left:948px;top:197.3px;width:218px;height:13.15px;background:#2c2e31;"></div>
<div class="t" style="left:950.5px;top:201.00px;font-size:8.1px;color:#f2f2f2;font-weight:normal;font-family:'Liberation Sans',sans-serif;letter-spacing:-0.05px;font-style:normal;">Linetype</div>
<div class="t" style="left:1120.5px;top:201.00px;font-size:8.1px;color:#f0f0f0;font-weight:normal;font-family:'Liberation Sans',sans-serif;letter-spacing:-0.05px;font-style:normal;">ByLayer</div>
<div class="a" style="left:948px;top:210.45px;width:218px;height:13.15px;background:#2c2e31;"></div>
<div class="t" style="left:950.5px;top:214.00px;font-size:8.1px;color:#f2f2f2;font-weight:normal;font-family:'Liberation Sans',sans-serif;letter-spacing:-0.05px;font-style:normal;">Linetype scale</div>
<div class="t" style="left:1061.5px;top:214.00px;font-size:8.1px;color:#f0f0f0;font-weight:normal;font-family:'Liberation Sans',sans-serif;letter-spacing:-0.05px;font-style:normal;">1</div>
<div class="a" style="left:948px;top:223.6px;width:218px;height:13.15px;background:#2c2e31;"></div>
<div class="t" style="left:950.5px;top:227.00px;font-size:8.1px;color:#f2f2f2;font-weight:normal;font-family:'Liberation Sans',sans-serif;letter-spacing:-0.05px;font-style:normal;">Lineweight</div>
<div class="t" style="left:1119.5px;top:227.00px;font-size:8.1px;color:#f0f0f0;font-weight:normal;font-family:'Liberation Sans',sans-serif;letter-spacing:-0.05px;font-style:normal;">ByLayer</div>
<div class="a" style="left:948px;top:236.75px;width:218px;height:13.15px;background:#2c2e31;"></div>
<div class="t" style="left:950.5px;top:240.00px;font-size:8.1px;color:#f2f2f2;font-weight:normal;font-family:'Liberation Sans',sans-serif;letter-spacing:-0.05px;font-style:normal;">Transparency</div>
<div class="t" style="left:1061.5px;top:240.00px;font-size:8.1px;color:#f0f0f0;font-weight:normal;font-family:'Liberation Sans',sans-serif;letter-spacing:-0.05px;font-style:normal;">ByLayer</div>
<div class="a" style="left:948px;top:249.89999999999998px;width:218px;height:13.15px;background:#2c2e31;"></div>
<div class="t" style="left:950.5px;top:253.00px;font-size:8.1px;color:#f2f2f2;font-weight:normal;font-family:'Liberation Sans',sans-serif;letter-spacing:-0.05px;font-style:normal;">Elevation</div>
<div class="t" style="left:1061.5px;top:253.00px;font-size:8.1px;color:#f0f0f0;font-weight:normal;font-family:'Liberation Sans',sans-serif;letter-spacing:-0.05px;font-style:normal;">0 mm</div>
<div class="a" style="left:948px;top:263.05px;width:218px;height:13.15px;background:#45484c;"></div>
<div class="t" style="left:950.5px;top:265.00px;font-size:8.6px;color:#f4f4f4;font-weight:bold;font-family:'Liberation Sans',sans-serif;letter-spacing:-0.1px;font-style:normal;">View</div>
<div class="a" style="left:937.5px;top:266.05px;width:8.5px;height:7px;background:#d8d8d8;"></div>
<div class="a" style="left:939px;top:269.05px;width:5.5px;height:1px;background:#333;"></div>
<div class="a" style="left:948px;top:276.2px;width:218px;height:13.15px;background:#2c2e31;"></div>
<div class="t" style="left:950.5px;top:280.00px;font-size:8.1px;color:#f2f2f2;font-weight:normal;font-family:'Liberation Sans',sans-serif;letter-spacing:-0.05px;font-style:normal;">Camera</div>
<div class="t" style="left:1061.5px;top:280.00px;font-size:8.1px;color:#f0f0f0;font-weight:normal;font-family:'Liberation Sans',sans-serif;letter-spacing:-0.05px;font-style:normal;">10.4299, 4.5, 1</div>
<div class="a" style="left:937.5px;top:279.2px;width:8.5px;height:7px;background:#d8d8d8;"></div>
<div class="a" style="left:948px;top:289.35px;width:218px;height:13.15px;background:#2c2e31;"></div>
<div class="t" style="left:950.5px;top:293.00px;font-size:8.1px;color:#f2f2f2;font-weight:normal;font-family:'Liberation Sans',sans-serif;letter-spacing:-0.05px;font-style:normal;">Target</div>
<div class="t" style="left:1061.5px;top:293.00px;font-size:8.1px;color:#f0f0f0;font-weight:normal;font-family:'Liberation Sans',sans-serif;letter-spacing:-0.05px;font-style:normal;">10.4299, 4.5, 0</div>
<div class="a" style="left:937.5px;top:292.35px;width:8.5px;height:7px;background:#d8d8d8;"></div>
<div class="a" style="left:948px;top:302.5px;width:218px;height:13.15px;background:#2c2e31;"></div>
<div class="t" style="left:950.5px;top:306.00px;font-size:8.1px;color:#f2f2f2;font-weight:normal;font-family:'Liberation Sans',sans-serif;letter-spacing:-0.05px;font-style:normal;">Perspective</div>
<div class="t" style="left:1061.5px;top:306.00px;font-size:8.1px;color:#f0f0f0;font-weight:normal;font-family:'Liberation Sans',sans-serif;letter-spacing:-0.05px;font-style:normal;">Off</div>
<div class="a" style="left:948px;top:315.65px;width:218px;height:13.15px;background:#2c2e31;"></div>
<div class="t" style="left:950.5px;top:319.00px;font-size:8.1px;color:#f2f2f2;font-weight:normal;font-family:'Liberation Sans',sans-serif;letter-spacing:-0.05px;font-style:normal;">Lens length</div>
<div class="t" style="left:1061.5px;top:319.00px;font-size:8.1px;color:#f0f0f0;font-weight:normal;font-family:'Liberation Sans',sans-serif;letter-spacing:-0.05px;font-style:normal;">50 mm</div>
<div class="a" style="left:948px;top:328.8px;width:218px;height:13.15px;background:#2c2e31;"></div>
<div class="t" style="left:950.5px;top:332.00px;font-size:8.1px;color:#f2f2f2;font-weight:normal;font-family:'Liberation Sans',sans-serif;letter-spacing:-0.05px;font-style:normal;">Field of view</div>
<div class="t" style="left:1061.5px;top:332.00px;font-size:8.1px;color:#f0f0f0;font-weight:normal;font-family:'Liberation Sans',sans-serif;letter-spacing:-0.05px;font-style:normal;">39</div>
<div class="a" style="left:948px;top:341.95px;width:218px;height:13.15px;background:#2c2e31;"></div>
<div class="t" style="left:950.5px;top:345.00px;font-size:8.1px;color:#f2f2f2;font-weight:normal;font-family:'Liberation Sans',sans-serif;letter-spacing:-0.05px;font-style:normal;">Height</div>
<div class="t" style="left:1061.5px;top:345.00px;font-size:8.1px;color:#7c7c7c;font-weight:normal;font-family:'Liberation Sans',sans-serif;letter-spacing:-0.05px;font-style:normal;">212.24159 cm</div>
<div class="a" style="left:948px;top:355.1px;width:218px;height:13.15px;background:#2c2e31;"></div>
<div class="t" style="left:950.5px;top:358.00px;font-size:8.1px;color:#f2f2f2;font-weight:normal;font-family:'Liberation Sans',sans-serif;letter-spacing:-0.05px;font-style:normal;">Width</div>
<div class="t" style="left:1061.5px;top:358.00px;font-size:8.1px;color:#7c7c7c;font-weight:normal;font-family:'Liberation Sans',sans-serif;letter-spacing:-0.05px;font-style:normal;">429.19312 cm</div>
<div class="a" style="left:948px;top:368.25px;width:218px;height:13.15px;background:#2c2e31;"></div>
<div class="t" style="left:950.5px;top:372.00px;font-size:8.1px;color:#f2f2f2;font-weight:normal;font-family:'Liberation Sans',sans-serif;letter-spacing:-0.05px;font-style:normal;">Clipping</div>
<div class="t" style="left:1061.5px;top:372.00px;font-size:8.1px;color:#f0f0f0;font-weight:normal;font-family:'Liberation Sans',sans-serif;letter-spacing:-0.05px;font-style:normal;">Off</div>
<div class="a" style="left:948px;top:381.4px;width:218px;height:13.15px;background:#2c2e31;"></div>
<div class="t" style="left:950.5px;top:385.00px;font-size:8.1px;color:#f2f2f2;font-weight:normal;font-family:'Liberation Sans',sans-serif;letter-spacing:-0.05px;font-style:normal;">Front plane</div>
<div class="t" style="left:1061.5px;top:385.00px;font-size:8.1px;color:#f0f0f0;font-weight:normal;font-family:'Liberation Sans',sans-serif;letter-spacing:-0.05px;font-style:normal;">0 mm</div>
<div class="a" style="left:948px;top:394.55px;width:218px;height:13.15px;background:#2c2e31;"></div>
<div class="t" style="left:950.5px;top:398.00px;font-size:8.1px;color:#f2f2f2;font-weight:normal;font-family:'Liberation Sans',sans-serif;letter-spacing:-0.05px;font-style:normal;">Back plane</div>
<div class="t" style="left:1061.5px;top:398.00px;font-size:8.1px;color:#f0f0f0;font-weight:normal;font-family:'Liberation Sans',sans-serif;letter-spacing:-0.05px;font-style:normal;">0 mm</div>
<div class="a" style="left:948px;top:407.7px;width:218px;height:13.15px;background:#2c2e31;"></div>
<div class="t" style="left:950.5px;top:411.00px;font-size:8.1px;color:#f2f2f2;font-weight:normal;font-family:'Liberation Sans',sans-serif;letter-spacing:-0.05px;font-style:normal;">Visual style</div>
<div class="t" style="left:1061.5px;top:411.00px;font-size:8.1px;color:#f0f0f0;font-weight:normal;font-family:'Liberation Sans',sans-serif;letter-spacing:-0.05px;font-style:normal;">2dWireframe</div>
<div class="a" style="left:948px;top:420.85px;width:218px;height:13.15px;background:#45484c;"></div>
<div class="t" style="left:950.5px;top:423.00px;font-size:8.6px;color:#f4f4f4;font-weight:bold;font-family:'Liberation Sans',sans-serif;letter-spacing:-0.1px;font-style:normal;">Misc</div>
<div class="a" style="left:937.5px;top:423.85px;width:8.5px;height:7px;background:#d8d8d8;"></div>
<div class="a" style="left:939px;top:426.85px;width:5.5px;height:1px;background:#333;"></div>
<div class="a" style="left:948px;top:434.0px;width:218px;height:13.15px;background:#2c2e31;"></div>
<div class="t" style="left:950.5px;top:437.00px;font-size:8.1px;color:#f2f2f2;font-weight:normal;font-family:'Liberation Sans',sans-serif;letter-spacing:-0.05px;font-style:normal;">Annotation scale</div>
<div class="t" style="left:1061.5px;top:437.00px;font-size:8.1px;color:#f0f0f0;font-weight:normal;font-family:'Liberation Sans',sans-serif;letter-spacing:-0.05px;font-style:normal;">1:1</div>
<div class="a" style="left:948px;top:447.15px;width:218px;height:13.15px;background:#2c2e31;"></div>
<div class="t" style="left:950.5px;top:450.00px;font-size:8.1px;color:#f2f2f2;font-weight:normal;font-family:'Liberation Sans',sans-serif;letter-spacing:-0.05px;font-style:normal;">Default lighting</div>
<div class="t" style="left:1061.5px;top:450.00px;font-size:8.1px;color:#f0f0f0;font-weight:normal;font-family:'Liberation Sans',sans-serif;letter-spacing:-0.05px;font-style:normal;">On</div>
<svg class="a" style="left:936px;top:138px" width="232" height="470" viewBox="936 138 232 470"><path d="M948 183.65h218" stroke="#3b3e42" stroke-width="1"/><path d="M948 196.8h218" stroke="#3b3e42" stroke-width="1"/><path d="M948 209.95000000000002h218" stroke="#3b3e42" stroke-width="1"/><path d="M1064 203.60000000000002h53" stroke="#ccc" stroke-width="0.8"/><path d="M948 223.1h218" stroke="#3b3e42" stroke-width="1"/><path d="M948 236.25h218" stroke="#3b3e42" stroke-width="1"/><path d="M1063 229.9h53" stroke="#ccc" stroke-width="0.8"/><path d="M948 249.4h218" stroke="#3b3e42" stroke-width="1"/><path d="M948 262.54999999999995h218" stroke="#3b3e42" stroke-width="1"/><path d="M948 288.84999999999997h218" stroke="#3b3e42" stroke-width="1"/><path d="M939.5 282.7h4.5M941.75 280.4v4.6" stroke="#333" stroke-width="1"/><path d="M948 302.0h218" stroke="#3b3e42" stroke-width="1"/><path d="M939.5 295.85h4.5M941.75 293.55v4.6" stroke="#333" stroke-width="1"/><path d="M948 315.15h218" stroke="#3b3e42" stroke-width="1"/><path d="M948 328.29999999999995h218" stroke="#3b3e42" stroke-width="1"/><path d="M948 341.45h218" stroke="#3b3e42" stroke-width="1"/><path d="M948 354.59999999999997h218" stroke="#3b3e42" stroke-width="1"/><path d="M948 367.75h218" stroke="#3b3e42" stroke-width="1"/><path d="M948 380.9h218" stroke="#3b3e42" stroke-width="1"/><path d="M948 394.04999999999995h218" stroke="#3b3e42" stroke-width="1"/><path d="M948 407.2h218" stroke="#3b3e42" stroke-width="1"/><path d="M948 420.34999999999997h218" stroke="#3b3e42" stroke-width="1"/><path d="M948 446.65h218" stroke="#3b3e42" stroke-width="1"/><path d="M948 459.79999999999995h218" stroke="#3b3e42" stroke-width="1"/><path d="M1059.5 171.0v13.15" stroke="#3b3e42" stroke-width="1"/><path d="M1059.5 184.15v13.15" stroke="#3b3e42" stroke-width="1"/><path d="M1059.5 197.3v13.15" stroke="#3b3e42" stroke-width="1"/><path d="M1059.5 210.45v13.15" stroke="#3b3e42" stroke-width="1"/><path d="M1059.5 223.6v13.15" stroke="#3b3e42" stroke-width="1"/><path d="M1059.5 236.75v13.15" stroke="#3b3e42" stroke-width="1"/><path d="M1059.5 249.89999999999998v13.15" stroke="#3b3e42" stroke-width="1"/><path d="M1059.5 276.2v13.15" stroke="#3b3e42" stroke-width="1"/><path d="M1059.5 289.35v13.15" stroke="#3b3e42" stroke-width="1"/><path d="M1059.5 302.5v13.15" stroke="#3b3e42" stroke-width="1"/><path d="M1059.5 315.65v13.15" stroke="#3b3e42" stroke-width="1"/><path d="M1059.5 328.8v13.15" stroke="#3b3e42" stroke-width="1"/><path d="M1059.5 341.95v13.15" stroke="#3b3e42" stroke-width="1"/><path d="M1059.5 355.1v13.15" stroke="#3b3e42" stroke-width="1"/><path d="M1059.5 368.25v13.15" stroke="#3b3e42" stroke-width="1"/><path d="M1059.5 381.4v13.15" stroke="#3b3e42" stroke-width="1"/><path d="M1059.5 394.55v13.15" stroke="#3b3e42" stroke-width="1"/><path d="M1059.5 407.7v13.15" stroke="#3b3e42" stroke-width="1"/><path d="M1059.5 434.0v13.15" stroke="#3b3e42" stroke-width="1"/><path d="M1059.5 447.15v13.15" stroke="#3b3e42" stroke-width="1"/><path d="M948.5 157.85v302.45M1165.5 157.85v302.45" stroke="#3b3e42" stroke-width="1"/></svg>
<div class="a" style="left:1150.7px;top:139.9px;width:15.2px;height:14px;background:#284a72;"></div>
<div class="a" style="left:1153.3px;top:142.3px;width:10.2px;height:9px;background:#3a5878;"></div>
<svg class="a" style="left:1136px;top:136px" width="32" height="20" viewBox="1136 136 32 20"><path d="M1141 142h7l-2.8 3.5v4l-1.4 1v-5z" fill="none" stroke="#ccc" stroke-width="0.8"/><path d="M1147.5 147l-1.5 3h1.5l-1 2.5" stroke="#f5c020" stroke-width="1" fill="none"/><path d="M1152.8 147c2.8-4 8.6-4 11.4 0c-2.8 3.8-8.6 3.8-11.4 0z" fill="#e4e8f0" /><circle cx="1158.5" cy="146.8" r="2.4" fill="#2d7de0"/><circle cx="1158.5" cy="146.8" r="1" fill="#111"/></svg>
<div class="a" style="left:914.3px;top:124.4px;width:225.7px;height:64.9px;background:#2e3033;"></div>
<div class="a" style="left:913.6px;top:124.4px;width:0.9px;height:64.9px;background:#3a3c40;"></div>
<div class="a" style="left:1139.3px;top:124.4px;width:0.9px;height:64.9px;background:#3a3c40;"></div>
<div class="a" style="left:1020.7px;top:127px;width:29.7px;height:44.3px;background:#3a3d41;"></div>
<svg class="a" style="left:910px;top:120px" width="235" height="75" viewBox="910 120 235 75"><path d="M942.6 131.5v-1.3a2.4 2.4 0 0 1 4.8 0v1.3" stroke="#bbb" stroke-width="1.1" fill="none"/><rect x="941.5" y="131.3" width="7" height="4.4" fill="#ccc"/><path d="M951.5 130.5h8.5" stroke="#3c8ce7" stroke-width="1"/><path d="M950 130.5l2.3-1.8v3.6zM961.5 130.5l-2.3-1.8v3.6z" fill="#3c8ce7"/><path d="M943 140.5v5" stroke="#3c8ce7" stroke-width="1"/><path d="M943 138.8l-1.8 2.4h3.6zM943 147.4l-1.8-2.4h3.6z" fill="#3c8ce7"/><text x="950.0" y="144.8" font-family="Liberation Serif" font-style="italic" font-size="15.5" fill="#ececec" stroke="#ececec" stroke-width="0.35">f</text><text x="954.8" y="147.4" font-family="Liberation Serif" font-style="italic" font-size="12.1" fill="#ececec" stroke="#ececec" stroke-width="0.3">x</text><path d="M990 128.5v13" stroke="#a060b0" stroke-width="0.9"/><rect x="994.5" y="128.2" width="9" height="8.5" fill="none" stroke="#ccc" stroke-width="0.9"/><circle cx="995.5" cy="140" r="3.5" fill="#2e3033" stroke="#ccc" stroke-width="0.9"/><path d="M994 138.5l2 2" stroke="#ccc" stroke-width="0.8"/><text x="998.5" y="144.8" font-family="Liberation Serif" font-style="italic" font-size="15.5" fill="#ececec" stroke="#ececec" stroke-width="0.35">f</text><text x="1003.3" y="147.4" font-family="Liberation Serif" font-style="italic" font-size="12.1" fill="#ececec" stroke="#ececec" stroke-width="0.3">x</text><path d="M1025.6 140.2h6.9v-11.5z" fill="none" stroke="#c8c8c8" stroke-width="1"/><path d="M1034.6 128v14" stroke="#b8b8b8" stroke-width="1"/><path d="M1036 128.8v11.4l3.8-5.5z" fill="#3c8ce7"/><text x="1035.0" y="144.8" font-family="Liberation Serif" font-style="italic" font-size="15.5" fill="#ececec" stroke="#ececec" stroke-width="0.35">f</text><text x="1039.8" y="147.4" font-family="Liberation Serif" font-style="italic" font-size="12.1" fill="#ececec" stroke="#ececec" stroke-width="0.3">x</text><rect x="1055.5" y="128.3" width="6.3" height="13" fill="none" stroke="#c8c8c8" stroke-width="1"/><path d="M1062 128.3l5.5 13h-5.5" stroke="#3c8ce7" stroke-width="1" fill="none"/><text x="1064.5" y="144.8" font-family="Liberation Serif" font-style="italic" font-size="15.5" fill="#ececec" stroke="#ececec" stroke-width="0.35">f</text><text x="1069.3" y="147.4" font-family="Liberation Serif" font-style="italic" font-size="12.1" fill="#ececec" stroke="#ececec" stroke-width="0.3">x</text><path d="M1095.4 133.2c5-7.5 15.4-7.5 20.4 0c-5 7-15.4 7-20.4 0z" fill="#e6e6ee"/><circle cx="1105.8" cy="132.8" r="4.6" fill="#2d7de0"/><circle cx="1105.8" cy="132.8" r="2.1" fill="#0d0d18"/><circle cx="1104.6" cy="131.6" r="0.9" fill="#fff"/><text x="1104.5" y="144.8" font-family="Liberation Serif" font-style="italic" font-size="15.5" fill="#ececec" stroke="#ececec" stroke-width="0.35">f</text><text x="1109.3" y="147.4" font-family="Liberation Serif" font-style="italic" font-size="12.1" fill="#ececec" stroke="#ececec" stroke-width="0.3">x</text></svg>
<div class="t" style="left:751.5px;width:400px;text-align:center;top:151.00px;font-size:8.6px;color:#e0e0e0;font-weight:normal;font-family:'Liberation Sans',sans-serif;letter-spacing:0px;font-style:normal;">Autoconstrain</div>
<div class="t" style="left:800px;width:400px;text-align:center;top:151.00px;font-size:8.6px;color:#e0e0e0;font-weight:normal;font-family:'Liberation Sans',sans-serif;letter-spacing:0px;font-style:normal;">Reference</div>
<div class="t" style="left:800px;width:400px;text-align:center;top:162.00px;font-size:8.6px;color:#e0e0e0;font-weight:normal;font-family:'Liberation Sans',sans-serif;letter-spacing:0px;font-style:normal;">curves</div>
<div class="t" style="left:835.8px;width:400px;text-align:center;top:151.00px;font-size:8.6px;color:#e0e0e0;font-weight:normal;font-family:'Liberation Sans',sans-serif;letter-spacing:0px;font-style:normal;">Flipline</div>
<div class="t" style="left:865.8px;width:400px;text-align:center;top:151.00px;font-size:8.6px;color:#e0e0e0;font-weight:normal;font-family:'Liberation Sans',sans-serif;letter-spacing:0px;font-style:normal;">Stretch</div>
<div class="t" style="left:906px;width:400px;text-align:center;top:151.00px;font-size:8.6px;color:#e0e0e0;font-weight:normal;font-family:'Liberation Sans',sans-serif;letter-spacing:0px;font-style:normal;">Visibility</div>
<div class="t" style="left:906px;width:400px;text-align:center;top:163.00px;font-size:8.6px;color:#e0e0e0;font-weight:normal;font-family:'Liberation Sans',sans-serif;letter-spacing:0px;font-style:normal;">States Panel</div>
<div class="t" style="left:990.5px;top:175.00px;font-size:8.4px;color:#f4f4f4;font-weight:bold;font-family:'Liberation Sans',sans-serif;letter-spacing:0px;font-style:normal;">Parametric Blocks</div>
<svg class="a" style="left:1035px;top:155px" width="15" height="17" viewBox="1035 155 15 17"><path d="M1039.5 157.2v10.5l2.5-2.4 1.8 4 1.5-0.7-1.8-3.8h3.4z" fill="#fff" stroke="#111" stroke-width="0.6"/></svg>
<div class="a" style="left:1021.6px;top:172px;width:37.1px;height:14.7px;background:#ffffff;border:0.5px solid #aaa"></div>
<div class="t" style="left:1025.2px;top:176.00px;font-size:8.8px;color:#606060;font-weight:normal;font-family:'Liberation Sans',sans-serif;letter-spacing:0px;font-style:normal;">Flipline</div>
<div class="a" style="left:1168px;top:124.4px;width:32px;height:7.6px;background:#2b2d30;"></div>
<div class="a" style="left:1168.5px;top:132px;width:31.5px;height:543px;background:#1c1d1f;"></div>
<div class="a" style="left:1168.5px;top:201.3px;width:31.5px;height:33.4px;background:#2d3033;"></div>
<svg class="a" style="left:1166px;top:120px" width="34" height="350" viewBox="1166 120 34 350"><circle cx="1178.5" cy="127.5" r="0.75" fill="#ccc"/><circle cx="1181.7" cy="127.5" r="0.75" fill="#ccc"/><circle cx="1184.9" cy="127.5" r="0.75" fill="#ccc"/><circle cx="1188.1" cy="127.5" r="0.75" fill="#ccc"/><path d="M1181.5 152c-2-1.8-3.3-3.6-3.3-5.8a5.6 5.6 0 0 1 11.2 0c0 2.2-1.3 4-3.3 5.8v2.3h-4.6z" fill="none" stroke="#d8d8d8" stroke-width="1"/><path d="M1181.8 155.5h4M1182.2 153.3h3.2" stroke="#d8d8d8" stroke-width="0.9"/><path d="M1176.8 181.5c0-4.5 3-7.3 7-7.3s7 2.8 7 7.3c-1.5 2.5-4 4.8-7 6.3c-3-1.5-5.5-3.8-7-6.3z" fill="none" stroke="#d8d8d8" stroke-width="1.1"/><path d="M1180.3 175.5v8.5M1183.8 174.3v13.2M1187.3 175.5v8.5" stroke="#d8d8d8" stroke-width="0.9" fill="none"/><circle cx="1183.8" cy="189.6" r="1.4" fill="none" stroke="#d8d8d8" stroke-width="0.9"/><path d="M1176.5 212.5h14M1176.5 217.2h14M1176.5 221.9h14" stroke="#d8d8d8" stroke-width="1"/><path d="M1180.5 210.8l1.7 1.7-1.7 1.7-1.7-1.7z M1187 215.5l1.7 1.7-1.7 1.7-1.7-1.7z M1183 220.2l1.7 1.7-1.7 1.7-1.7-1.7z" fill="#2d3033" stroke="#d8d8d8" stroke-width="0.9"/><path d="M1184 244l7.5 4-7.5 4-7.5-4z" fill="none" stroke="#d8d8d8" stroke-width="1"/><path d="M1176.5 251.5l7.5 4 7.5-4M1176.5 255l7.5 4 7.5-4" fill="none" stroke="#d8d8d8" stroke-width="1"/><path d="M1186.5 283v8a2.5 2.5 0 0 1-5 0v-10a1.7 1.7 0 0 1 3.4 0v9" fill="none" stroke="#d8d8d8" stroke-width="1"/><rect x="1177" y="314" width="14" height="14" fill="none" stroke="#d8d8d8" stroke-width="1.1"/><path d="M1177 314l14 14M1181 314v14M1185 314v14M1177 318h14M1177 322h14M1179 325l5 0-5-5z" stroke="#d8d8d8" stroke-width="0.6" fill="none"/><text x="1176.5" y="359" font-family="Liberation Serif" font-style="italic" font-weight="bold" font-size="11" fill="#e8e8e8">f</text><text x="1181.5" y="358" font-family="Liberation Serif" font-style="italic" font-size="8" fill="#e8e8e8">(x)</text><rect x="1176.5" y="382" width="7" height="3.5" fill="none" stroke="#d8d8d8" stroke-width="0.9"/><rect x="1184" y="388" width="7" height="3.5" fill="none" stroke="#d8d8d8" stroke-width="0.9"/><rect x="1184" y="393.5" width="7" height="3.5" fill="none" stroke="#d8d8d8" stroke-width="0.9"/><path d="M1179 385.5v10h5M1179 389.7h5" stroke="#d8d8d8" stroke-width="0.9" fill="none"/><path d="M1178.5 428h12a3 3 0 0 0 0-6a5 5 0 0 0-9.5-1a3.5 3.5 0 0 0-2.5 7z" fill="none" stroke="#d8d8d8" stroke-width="1"/><path d="M1184.5 426.5v-4.5M1182.5 424l2-2 2 2" stroke="#d8d8d8" stroke-width="0.9" fill="none"/><rect x="1178" y="451" width="5" height="5" fill="none" stroke="#d8d8d8" stroke-width="0.9"/><path d="M1178 457.3h5" stroke="#d8d8d8" stroke-width="0.7"/><rect x="1178" y="458" width="5" height="5" fill="none" stroke="#d8d8d8" stroke-width="0.9"/><path d="M1178 464.3h5" stroke="#d8d8d8" stroke-width="0.7"/><rect x="1186" y="451" width="5" height="5" fill="none" stroke="#d8d8d8" stroke-width="0.9"/><path d="M1186 457.3h5" stroke="#d8d8d8" stroke-width="0.7"/><rect x="1186" y="458" width="5" height="5" fill="none" stroke="#d8d8d8" stroke-width="0.9"/><path d="M1186 464.3h5" stroke="#d8d8d8" stroke-width="0.7"/></svg>
<div class="a" style="left:0px;top:604px;width:1168px;height:57px;background:#2b2d30;"></div>
<div class="a" style="left:7px;top:605px;width:1148.6px;height:37.6px;background:#858585;"></div>
<div class="a" style="left:1155.6px;top:605px;width:12.9px;height:37.6px;background:#f0f0f0;"></div>
<div class="a" style="left:0px;top:642.6px;width:1168px;height:18.4px;background:#2e3033;"></div>
<svg class="a" style="left:0px;top:600px" width="1170" height="45" viewBox="0 600 1170 45"><path d="M1158.8 612.3l3 -3 3 3M1158.8 636.5l3 3 3-3" stroke="#444" stroke-width="1.2" fill="none"/><path d="M1.5 611l4.5 4.5M6 611l-4.5 4.5" stroke="#ccc" stroke-width="0.8"/><circle cx="3" cy="625.0" r="0.55" fill="#bbb"/><circle cx="3" cy="627.3" r="0.55" fill="#bbb"/><circle cx="3" cy="629.6" r="0.55" fill="#bbb"/><circle cx="3" cy="631.9" r="0.55" fill="#bbb"/></svg>
<div class="t" style="left:11.1px;top:613.00px;font-size:11.4px;color:#f4f4f4;font-weight:bold;font-family:'Liberation Mono',monospace;letter-spacing:0px;font-style:normal;">:</div>
<div class="t" style="left:11.1px;top:627.00px;font-size:11.4px;color:#f4f4f4;font-weight:bold;font-family:'Liberation Mono',monospace;letter-spacing:0px;font-style:normal;">:</div>
<div class="t" style="left:24px;top:627.00px;font-size:11.4px;color:#f8f8f8;font-weight:normal;font-family:'Liberation Mono',monospace;letter-spacing:0px;font-style:normal;">_qsave</div>
<div class="t" style="left:7.6px;top:647.00px;font-size:11.4px;color:#e8e8e8;font-weight:bold;font-family:'Liberation Mono',monospace;letter-spacing:0px;font-style:normal;">:</div>
<div class="t" style="left:21.5px;top:647.00px;font-size:11.35px;color:#b4b4b4;font-weight:normal;font-family:'Liberation Mono',monospace;letter-spacing:0px;font-style:italic;">Enter command</div>
<div class="a" style="left:0px;top:661px;width:1168.5px;height:14px;background:#1c1d1f;"></div>
<div class="t" style="left:3px;top:666.00px;font-size:7.8px;color:#e0e0e0;font-weight:normal;font-family:'Liberation Sans',sans-serif;letter-spacing:0px;font-style:normal;">Ready</div>
<div class="a" style="left:881.5px;top:663px;width:27.5px;height:11px;background:#45484d;"></div>
<div class="a" style="left:1004.5px;top:663px;width:23.0px;height:11px;background:#45484d;"></div>
<div class="a" style="left:1029.5px;top:663px;width:18.0px;height:11px;background:#45484d;"></div>
<div class="a" style="left:1049.5px;top:663px;width:23.0px;height:11px;background:#45484d;"></div>
<div class="a" style="left:1074.5px;top:663px;width:13.0px;height:11px;background:#45484d;"></div>
<div class="a" style="left:1089.5px;top:663px;width:17.0px;height:11px;background:#45484d;"></div>
<svg class="a" style="left:540px;top:660px" width="660" height="15" viewBox="540 660 660 15"><path d="M545 663v11" stroke="#8a8a8a" stroke-width="0.8"/><path d="M660 663v11" stroke="#8a8a8a" stroke-width="0.8"/><path d="M697.5 663v11" stroke="#8a8a8a" stroke-width="0.8"/><path d="M735.8 663v11" stroke="#8a8a8a" stroke-width="0.8"/><path d="M768.7 663v11" stroke="#8a8a8a" stroke-width="0.8"/><path d="M795.5 663v11" stroke="#8a8a8a" stroke-width="0.8"/><path d="M820 663v11" stroke="#8a8a8a" stroke-width="0.8"/><path d="M851.7 663v11" stroke="#8a8a8a" stroke-width="0.8"/><path d="M880.8 663v11" stroke="#8a8a8a" stroke-width="0.8"/><path d="M909.5 663v11" stroke="#8a8a8a" stroke-width="0.8"/><path d="M943.7 663v11" stroke="#8a8a8a" stroke-width="0.8"/><path d="M964.2 663v11" stroke="#8a8a8a" stroke-width="0.8"/><path d="M986.3 663v11" stroke="#8a8a8a" stroke-width="0.8"/><path d="M1003.3 663v11" stroke="#8a8a8a" stroke-width="0.8"/><path d="M1028.3 663v11" stroke="#8a8a8a" stroke-width="0.8"/><path d="M1048.7 663v11" stroke="#8a8a8a" stroke-width="0.8"/><path d="M1073.3 663v11" stroke="#8a8a8a" stroke-width="0.8"/><path d="M1088.4 663v11" stroke="#8a8a8a" stroke-width="0.8"/><path d="M1107.4 663v11" stroke="#8a8a8a" stroke-width="0.8"/><path d="M1139.3 663v11" stroke="#8a8a8a" stroke-width="0.8"/><path d="M1162.6 663v11" stroke="#8a8a8a" stroke-width="0.8"/><path d="M1165.5 667.5h5l-2.5 2.5z" fill="#eee"/><rect x="1197" y="667" width="1.2" height="1.2" fill="#aaa"/><rect x="1195" y="669.5" width="1.2" height="1.2" fill="#aaa"/><rect x="1197" y="669.5" width="1.2" height="1.2" fill="#aaa"/><rect x="1193" y="672" width="1.2" height="1.2" fill="#aaa"/><rect x="1195" y="672" width="1.2" height="1.2" fill="#aaa"/><rect x="1197" y="672" width="1.2" height="1.2" fill="#aaa"/></svg>
<div class="t" style="left:415.0px;width:400px;text-align:center;top:665.00px;font-size:7.6px;color:#e8e8e8;font-weight:normal;font-family:'Liberation Sans',sans-serif;letter-spacing:0px;font-style:normal;">-534.697, 1467.9547, 0</div>
<div class="t" style="left:478.75px;width:400px;text-align:center;top:665.00px;font-size:7.6px;color:#e8e8e8;font-weight:normal;font-family:'Liberation Sans',sans-serif;letter-spacing:0px;font-style:normal;">Standard</div>
<div class="t" style="left:515.75px;width:400px;text-align:center;top:665.00px;font-size:7.6px;color:#e8e8e8;font-weight:normal;font-family:'Liberation Sans',sans-serif;letter-spacing:0px;font-style:normal;">Standard</div>
<div class="t" style="left:551.6px;width:400px;text-align:center;top:665.00px;font-size:7.6px;color:#e8e8e8;font-weight:normal;font-family:'Liberation Sans',sans-serif;letter-spacing:0px;font-style:normal;">Drafting</div>
<div class="t" style="left:582.5px;width:400px;text-align:center;top:665.00px;font-size:7.6px;color:#7a7a7a;font-weight:normal;font-family:'Liberation Sans',sans-serif;letter-spacing:0px;font-style:normal;">SNAP</div>
<div class="t" style="left:608.25px;width:400px;text-align:center;top:665.00px;font-size:7.6px;color:#7a7a7a;font-weight:normal;font-family:'Liberation Sans',sans-serif;letter-spacing:0px;font-style:normal;">GRID</div>
<div class="t" style="left:635.25px;width:400px;text-align:center;top:665.00px;font-size:7.6px;color:#7a7a7a;font-weight:normal;font-family:'Liberation Sans',sans-serif;letter-spacing:0px;font-style:normal;">ORTHO</div>
<div class="t" style="left:665.25px;width:400px;text-align:center;top:665.00px;font-size:7.6px;color:#7a7a7a;font-weight:normal;font-family:'Liberation Sans',sans-serif;letter-spacing:0px;font-style:normal;">POLAR</div>
<div class="t" style="left:695.0px;width:400px;text-align:center;top:665.00px;font-size:7.6px;color:#f0f0f0;font-weight:normal;font-family:'Liberation Sans',sans-serif;letter-spacing:0px;font-style:normal;">ESNAP</div>
<div class="t" style="left:726.5px;width:400px;text-align:center;top:665.00px;font-size:7.6px;color:#7a7a7a;font-weight:normal;font-family:'Liberation Sans',sans-serif;letter-spacing:0px;font-style:normal;">STRACK</div>
<div class="t" style="left:754.5px;width:400px;text-align:center;top:665.00px;font-size:7.6px;color:#7a7a7a;font-weight:normal;font-family:'Liberation Sans',sans-serif;letter-spacing:0px;font-style:normal;">LWT</div>
<div class="t" style="left:775.25px;width:400px;text-align:center;top:665.00px;font-size:7.6px;color:#f4f4f4;font-weight:normal;font-family:'Liberation Sans',sans-serif;letter-spacing:0px;font-style:normal;">TILE</div>
<div class="t" style="left:794.5px;width:400px;text-align:center;top:665.00px;font-size:7.6px;color:#f0f0f0;font-weight:normal;font-family:'Liberation Sans',sans-serif;letter-spacing:0px;font-style:normal;">1:1</div>
<div class="t" style="left:815.5px;width:400px;text-align:center;top:665.00px;font-size:7.6px;color:#f0f0f0;font-weight:normal;font-family:'Liberation Sans',sans-serif;letter-spacing:0px;font-style:normal;">DUCS</div>
<div class="t" style="left:838.25px;width:400px;text-align:center;top:665.00px;font-size:7.6px;color:#f0f0f0;font-weight:normal;font-family:'Liberation Sans',sans-serif;letter-spacing:0px;font-style:normal;">DYN</div>
<div class="t" style="left:860.75px;width:400px;text-align:center;top:665.00px;font-size:7.6px;color:#f0f0f0;font-weight:normal;font-family:'Liberation Sans',sans-serif;letter-spacing:0px;font-style:normal;">QUAD</div>
<div class="t" style="left:880.5px;width:400px;text-align:center;top:665.00px;font-size:7.6px;color:#f0f0f0;font-weight:normal;font-family:'Liberation Sans',sans-serif;letter-spacing:0px;font-style:normal;">RT</div>
<div class="t" style="left:898.0px;width:400px;text-align:center;top:665.00px;font-size:7.6px;color:#f0f0f0;font-weight:normal;font-family:'Liberation Sans',sans-serif;letter-spacing:0px;font-style:normal;">HKA</div>
<div class="t" style="left:923.0px;width:400px;text-align:center;top:665.00px;font-size:7.6px;color:#6a6a6a;font-weight:normal;font-family:'Liberation Sans',sans-serif;letter-spacing:0px;font-style:normal;">LOCKUI</div>
<div class="t" style="left:951.0px;width:400px;text-align:center;top:665.00px;font-size:7.6px;color:#f0f0f0;font-weight:normal;font-family:'Liberation Sans',sans-serif;letter-spacing:0px;font-style:normal;">None</div>
</div></body></html>
